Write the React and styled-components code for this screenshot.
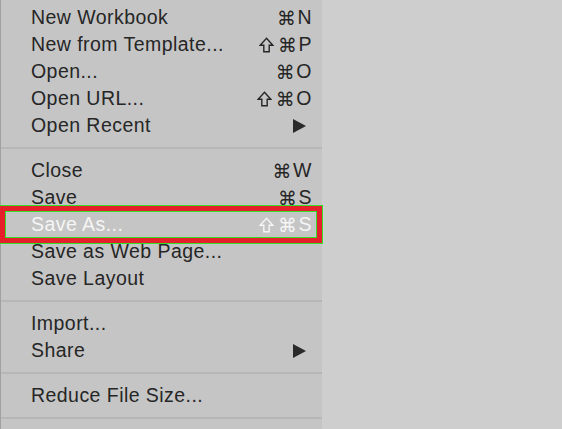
import React from 'react';
import styled, { createGlobalStyle } from 'styled-components';

const GlobalStyle = createGlobalStyle`
  html, body {
    margin: 0;
    padding: 0;
    background: #cecece;
    overflow: hidden;
  }
`;

const Page = styled.div`
  display: flex;
  width: 562px;
  height: 429px;
  background: #cecece;
  overflow: hidden;
`;

const Menu = styled.div`
  position: relative;
  width: 322px;
  flex-shrink: 0;
  background: #c5c5c5;
  border-left: 1px solid #9ea39d;
  box-sizing: border-box;
  padding-top: 4px;
  height: 460px;
  font-family: "Liberation Sans", "DejaVu Sans", sans-serif;
  font-size: 19.5px;
  letter-spacing: 0.45px;
  color: #262626;
`;

const Section = styled.div`
  display: flex;
  flex-direction: column;
`;

const Separator = styled.div`
  height: 2px;
  margin: 8px 0;
  background: #b7b7b7;
`;

const Row = styled.div`
  position: relative;
  display: flex;
  align-items: center;
  justify-content: space-between;
  height: 27px;
  padding: 0 10px 0 30px;
  color: ${({ $active }) => ($active ? '#f5f5f5' : '#262626')};
`;

const Label = styled.span`
  white-space: nowrap;
`;

const Shortcut = styled.span`
  display: flex;
  align-items: center;
  white-space: nowrap;
  letter-spacing: 0.5px;
`;

const Glyph = styled.span`
  font-family: "DejaVu Sans", sans-serif;
  font-size: 19px;
  margin-right: 1px;
`;

const ShiftIcon = styled.svg`
  width: 15px;
  height: 16px;
  margin-right: 4px;
`;

const Arrow = styled.span`
  width: 0;
  height: 0;
  margin-right: 6px;
  border-left: 13px solid #2a2a2a;
  border-top: 7px solid transparent;
  border-bottom: 7px solid transparent;
`;

const Annotation = styled.div`
  position: absolute;
  z-index: 2;
  top: -6px;
  left: -1px;
  width: 323px;
  height: 39px;
  box-sizing: border-box;
  border: 1px solid #34e22e;
  border-left: none;
  pointer-events: none;
`;

const AnnotationRed = styled.div`
  height: 100%;
  box-sizing: border-box;
  border: 5px solid #e5202a;
`;

const AnnotationInner = styled.div`
  height: 100%;
  box-sizing: border-box;
  border: 1px solid #34e22e;
`;

const Shift = () => (
  <ShiftIcon viewBox="0 0 15 16">
    <path
      d="M7.5 1.2 L13.8 8.2 H10.2 V14.8 H4.8 V8.2 H1.2 Z"
      fill="none"
      stroke="currentColor"
      strokeWidth="1.4"
      strokeLinejoin="miter"
    />
  </ShiftIcon>
);

const renderKeys = (keys) =>
  keys.split('').map((k, i) => {
    if (k === '⇧') return <Shift key={i} />;
    if (k === '⌘') return <Glyph key={i}>{k}</Glyph>;
    return <span key={i}>{k}</span>;
  });

const sections = [
  [
    { label: 'New Workbook', keys: '⌘N' },
    { label: 'New from Template...', keys: '⇧⌘P' },
    { label: 'Open...', keys: '⌘O' },
    { label: 'Open URL...', keys: '⇧⌘O' },
    { label: 'Open Recent', submenu: true },
  ],
  [
    { label: 'Close', keys: '⌘W' },
    { label: 'Save', keys: '⌘S' },
    { label: 'Save As...', keys: '⇧⌘S', active: true },
    { label: 'Save as Web Page...' },
    { label: 'Save Layout' },
  ],
  [
    { label: 'Import...' },
    { label: 'Share', submenu: true },
  ],
  [{ label: 'Reduce File Size...' }],
];

export default function App() {
  return (
    <Page>
      <GlobalStyle />
      <Menu>
        {sections.map((items, si) => (
          <React.Fragment key={si}>
            <Section>
              {items.map((item) => (
                <Row key={item.label} $active={item.active}>
                  {item.active && (
                    <Annotation>
                      <AnnotationRed>
                        <AnnotationInner />
                      </AnnotationRed>
                    </Annotation>
                  )}
                  <Label>{item.label}</Label>
                  {item.keys && <Shortcut>{renderKeys(item.keys)}</Shortcut>}
                  {item.submenu && <Arrow />}
                </Row>
              ))}
            </Section>
            <Separator />
          </React.Fragment>
        ))}
      </Menu>
    </Page>
  );
}
